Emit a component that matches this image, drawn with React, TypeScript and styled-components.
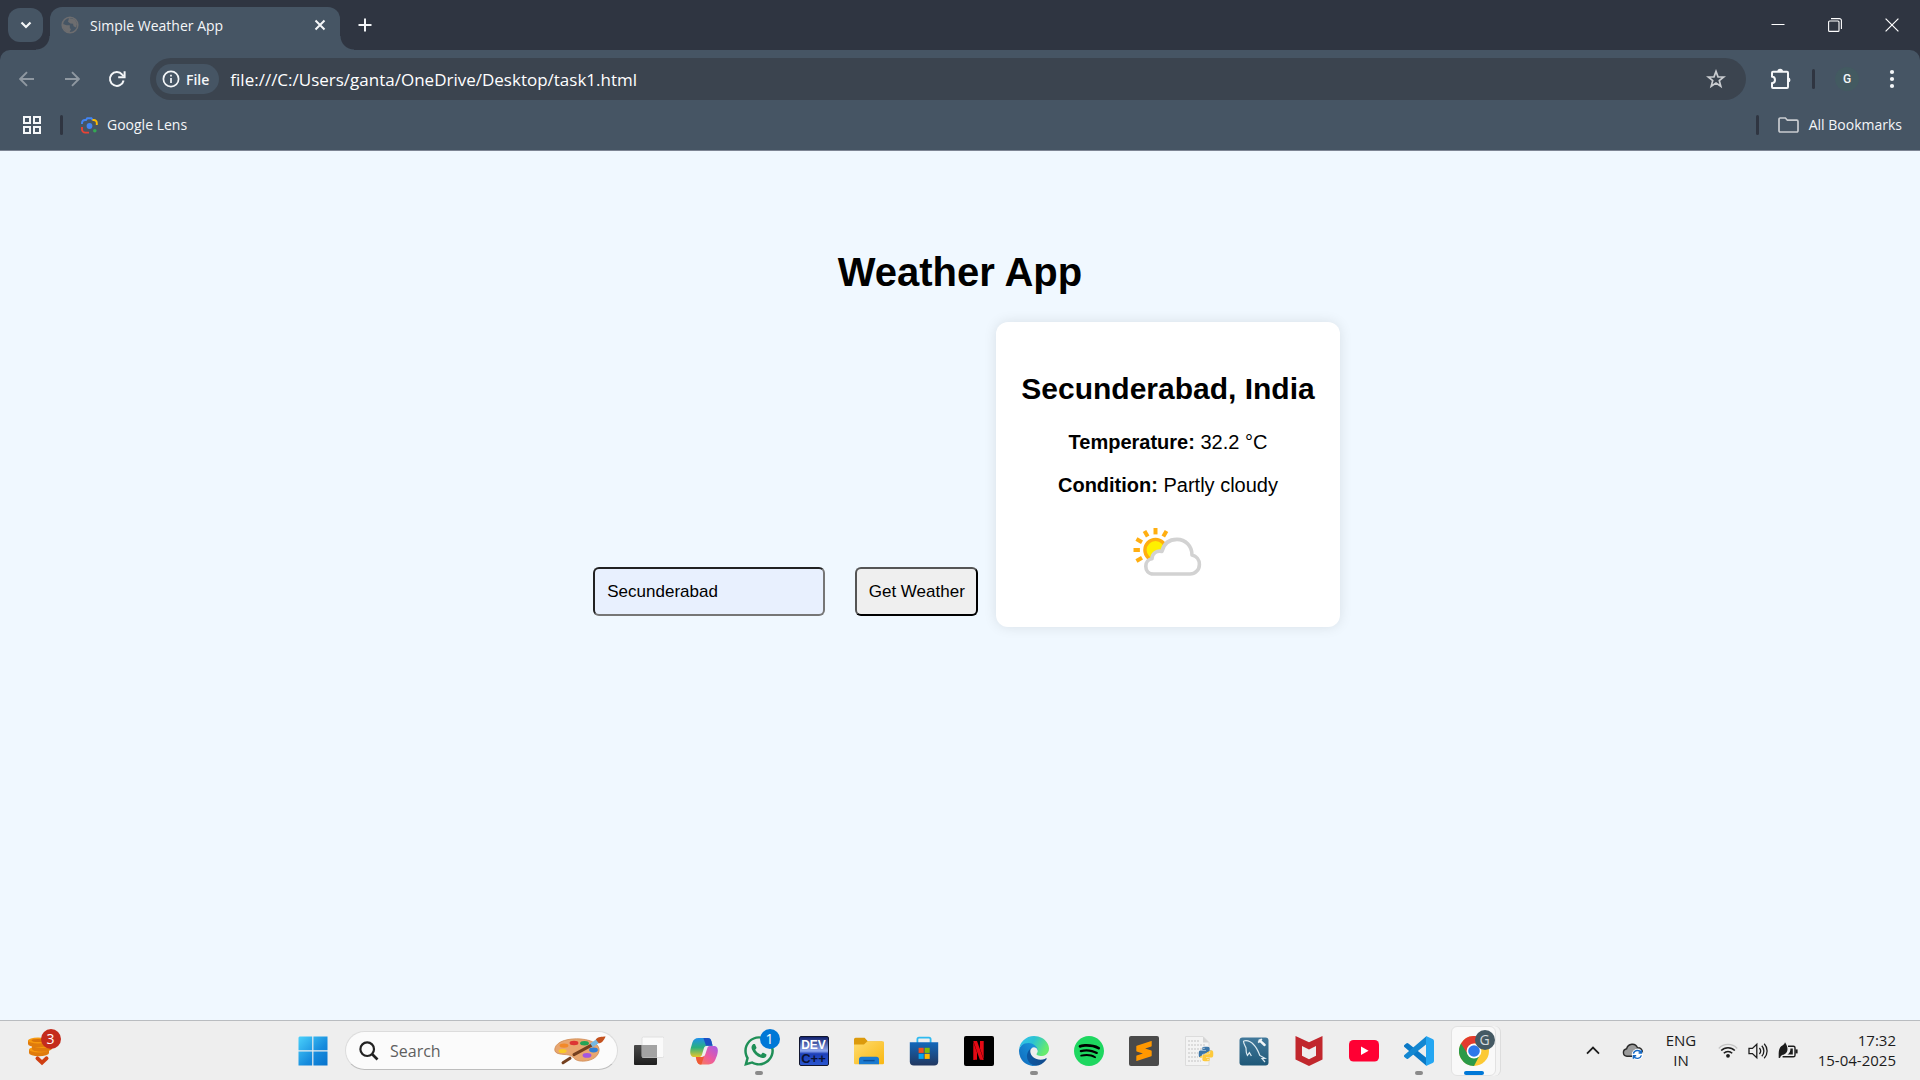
import React, { useState } from "react";
import styled, { createGlobalStyle } from "styled-components";
import { FaWhatsapp } from "react-icons/fa";
import { SiNetflix, SiSublimetext, SiSpotify, SiPython } from "react-icons/si";

const uiFont = `"Segoe UI", "Open Sans", "Noto Sans", sans-serif`;
const pageFont = `Arial, "Liberation Sans", sans-serif`;

const color = {
  strip: "#2f3541",
  toolbar: "#465564",
  field: "#3b444f",
  light: "#f4f6f8",
  muted: "#8f98a1",
  taskbar: "#eeeeee",
};

const GlobalStyle = createGlobalStyle`
  *, *::before, *::after { box-sizing: border-box; }
  body { margin: 0; }
  button, input { font: inherit; color: inherit; }
  svg { display: block; flex: none; }
`;

const Screen = styled.div`
  display: flex;
  flex-direction: column;
  min-height: 100vh;
  font-family: ${uiFont};
`;

/* ---------- Browser frame ---------- */

const Frame = styled.header`
  background: ${color.strip};
  color: ${color.light};
`;

const TabStrip = styled.div`
  display: flex;
  align-items: center;
  height: 50px;
  padding-left: 8px;
`;

const PlainButton = styled.button<{ $w?: number; $h?: number }>`
  display: flex;
  align-items: center;
  justify-content: center;
  flex: none;
  width: ${(p) => p.$w ?? 30}px;
  height: ${(p) => p.$h ?? 30}px;
  padding: 0;
  border: 0;
  background: transparent;
`;

const TabSearch = styled(PlainButton)`
  border-radius: 12px;
  background: ${color.toolbar};
`;

const Tab = styled.div`
  position: relative;
  display: flex;
  align-items: center;
  align-self: flex-end;
  width: 290px;
  height: 43px;
  margin-left: 7px;
  padding: 0 5px 7px 11px;
  gap: 11px;
  border-radius: 12px 12px 0 0;
  background: ${color.toolbar};
  font-size: 14px;

  &::before,
  &::after {
    content: "";
    position: absolute;
    bottom: 0;
    width: 14px;
    height: 14px;
  }
  &::before {
    right: 100%;
    background: radial-gradient(circle at 0 0, transparent 13px, ${color.toolbar} 14px);
  }
  &::after {
    left: 100%;
    background: radial-gradient(circle at 100% 0, transparent 13px, ${color.toolbar} 14px);
  }
`;

const TabTitle = styled.span`
  flex: 1;
  white-space: nowrap;
`;

const NewTab = styled(PlainButton)`
  margin-left: 10px;
`;

const WindowControls = styled.div`
  display: flex;
  margin-left: auto;
`;

const Bars = styled.div`
  border-bottom: 1px solid #7d8594;
  border-radius: 10px 10px 0 0;
  background: ${color.toolbar};
`;

const Toolbar = styled.div`
  display: flex;
  align-items: center;
  height: 50px;
  padding: 8px 13px 0 12px;
`;

const NavGroup = styled.div`
  display: flex;
  gap: 15px;
  margin-right: 18px;
`;

const AddressBar = styled.div`
  display: flex;
  align-items: center;
  flex: 1;
  height: 42px;
  padding: 0 15px 0 6px;
  border-radius: 21px;
  background: ${color.field};
`;

const SchemeChip = styled.button`
  display: flex;
  align-items: center;
  gap: 6px;
  height: 30px;
  padding: 0 10px 0 6px;
  border: 0;
  border-radius: 15px;
  background: ${color.toolbar};
  font-size: 14px;
  font-weight: 600;
`;

const AddressInput = styled.input`
  flex: 1;
  min-width: 0;
  padding: 0 0 0 11px;
  border: 0;
  outline: 0;
  background: transparent;
  color: #ffffff;
  font-size: 17px;
`;

const ToolGroup = styled.div`
  display: flex;
  align-items: center;
  margin-left: 20px;
`;

const Divider = styled.span<{ $gap: string }>`
  width: 3px;
  height: 20px;
  margin: ${(p) => p.$gap};
  border-radius: 2px;
  background: ${color.strip};
`;

const Avatar = styled(PlainButton)`
  margin-right: 18px;
  border-radius: 50%;
  background: #435a61;
  font-family: Roboto, sans-serif;
  font-size: 12px;
  font-weight: 500;
`;

const Bookmarks = styled.nav`
  display: flex;
  align-items: center;
  height: 50px;
  padding: 0 18px 0 17px;
  font-size: 14px;
`;

const BookmarkLink = styled.a`
  display: flex;
  align-items: center;
  gap: 9px;
  color: inherit;
  line-height: 18px;
  text-decoration: none;
  white-space: nowrap;
`;

const FolderButton = styled.button`
  display: flex;
  align-items: center;
  gap: 10px;
  padding: 0;
  border: 0;
  background: transparent;
  line-height: 18px;
  white-space: nowrap;
`;

const Spacer = styled.span`
  flex: 1;
`;

/* ---------- Weather page ---------- */

const Page = styled.main`
  display: flex;
  flex: 1;
  flex-direction: column;
  align-items: center;
  padding-top: 98px;
  background: #f0f8ff;
  color: #000000;
  font-family: ${pageFont};
`;

const Title = styled.h1`
  margin: 0 0 27px;
  font-size: 40px;
  line-height: 46px;
`;

const Lookup = styled.form`
  display: flex;
  align-items: flex-end;
  padding-left: 13px;
`;

const CityInput = styled.input`
  width: 232px;
  height: 49px;
  margin: 0 30px 11px 0;
  padding: 0 12px;
  border: 2px solid;
  border-color: #222222 #767676 #767676 #222222;
  border-radius: 6px;
  background: #e8f0fe;
  font-size: 17px;
`;

const SubmitButton = styled.button`
  width: 123px;
  height: 49px;
  margin: 0 18px 11px 0;
  padding: 0;
  border: 2px solid;
  border-color: #555555 #000000 #000000 #555555;
  border-radius: 6px;
  background: #efefef;
  font-size: 17px;
  white-space: nowrap;
`;

const Card = styled.section`
  display: flex;
  flex-direction: column;
  align-items: center;
  padding: 50px 25px 30px;
  border-radius: 12px;
  background: #ffffff;
  box-shadow: 0 0 13px rgba(0, 0, 0, 0.1);
`;

const City = styled.h2`
  margin: 0 0 25px;
  font-size: 30px;
  line-height: 34px;
`;

const Fact = styled.p`
  margin: 0 0 20px;
  font-size: 20px;
  line-height: 23px;
`;

/* ---------- Taskbar ---------- */

const Taskbar = styled.footer`
  display: flex;
  align-items: center;
  height: 60px;
  border-top: 1px solid #b9bcc0;
  background: ${color.taskbar};
  color: #1c1c1c;
  font-size: 14px;
`;

const Widgets = styled.div`
  flex: 1;
  padding-left: 12px;
`;

const AppCell = styled.button<{ $active?: boolean }>`
  position: relative;
  display: flex;
  align-items: center;
  justify-content: center;
  flex: none;
  width: ${(p) => (p.$active ? 45 : 55)}px;
  height: 50px;
  margin: 0 ${(p) => (p.$active ? 5 : 0)}px;
  padding: 0;
  border: ${(p) => (p.$active ? "1px solid #e2e2e2" : "0")};
  border-radius: 6px;
  background: ${(p) => (p.$active ? "#f9f9f9" : "transparent")};
  box-shadow: ${(p) => (p.$active ? "4px 0 0 #f4f4f4, 5px 0 0 #dddddd" : "none")};
`;

const Running = styled.span<{ $active?: boolean }>`
  position: absolute;
  bottom: ${(p) => (p.$active ? 0 : 1)}px;
  left: 50%;
  width: ${(p) => (p.$active ? 20 : 8)}px;
  height: 4px;
  border-radius: 2px;
  background: ${(p) => (p.$active ? "#0078d7" : "#8a8a8a")};
  transform: translateX(-50%);
`;

const Badge = styled.span<{ $bg: string; $fg?: string }>`
  position: absolute;
  top: 3px;
  left: 50%;
  width: 20px;
  height: 20px;
  margin-left: 1px;
  border-radius: 50%;
  background: ${(p) => p.$bg};
  color: ${(p) => p.$fg ?? "#ffffff"};
  font-size: 14px;
  line-height: 20px;
  text-align: center;
`;

const SearchBox = styled.label`
  display: flex;
  align-items: center;
  width: 273px;
  height: 39px;
  margin: 0 3px 0 5px;
  padding: 0 11px 0 13px;
  gap: 11px;
  border: 1px solid #dcdcdc;
  border-bottom-color: #bdbdbd;
  border-radius: 20px;
  background: #fbfbfb;
`;

const SearchInput = styled.input`
  flex: 1;
  min-width: 0;
  padding: 0;
  border: 0;
  outline: 0;
  background: transparent;
  font-size: 16px;

  &::placeholder {
    color: #5f5f5f;
    opacity: 1;
  }
`;

const Tray = styled.div`
  display: flex;
  align-items: center;
  margin-left: 72px;
  padding-right: 24px;
`;

const TrayText = styled.button<{ $align: "center" | "right"; $w: number }>`
  flex: none;
  width: ${(p) => p.$w}px;
  padding: 0 0 2px;
  border: 0;
  background: transparent;
  font-size: 15px;
  line-height: 20px;
  text-align: ${(p) => p.$align};
  white-space: pre-line;
`;

const QuickSettings = styled.button`
  display: flex;
  align-items: center;
  gap: 10px;
  margin-left: 9px;
  padding: 0;
  border: 0;
  background: transparent;
`;

const DevTile = styled.span`
  display: flex;
  flex-direction: column;
  width: 30px;
  height: 30px;
  border: 1px solid #10152e;
  border-radius: 2px;
  background: linear-gradient(#10206e, #8fa8f0 50%, #1d3fb8 60%, #2a56cf);
  overflow: hidden;
  color: #ffffff;
  font-family: "Liberation Sans", sans-serif;
  font-size: 12px;
  font-weight: 700;
  line-height: 16px;
  text-align: center;
`;

const DevSub = styled.span`
  color: #0b1233;
  font-size: 13px;
  line-height: 12px;
`;

const Tile = styled.span<{ $bg: string; $fg: string }>`
  display: flex;
  align-items: center;
  justify-content: center;
  width: 30px;
  height: 30px;
  border-radius: 2px;
  background: ${(p) => p.$bg};
  color: ${(p) => p.$fg};
`;

/* ---------- Drawings ---------- */

const stroke = (w: number, c = "currentColor") => ({
  fill: "none",
  stroke: c,
  strokeWidth: w,
});

const GlobeIcon = () => (
  <svg width="18" height="18" viewBox="0 0 18 18">
    <circle cx="9" cy="9" r="7.8" {...stroke(1.6, "#6d6d6f")} />
    <path d="M2 8 5.5 9.2 8.8 9.2 8.8 12 10 13.2 8.4 16.4 5 15.6 2 12ZM8 2 14 3.6 16 8 15 11.4 12.6 10.2 12 7.8 9.4 7.4 7 5.8Z" fill="#6d6d6f" />
  </svg>
);

const ArrowIcon = ({ right }: { right?: boolean }) => (
  <svg width="16" height="16" viewBox="0 0 16 16">
    <path d={right ? "M1 8H14.5M8 1.2 14.8 8 8 14.8" : "M15 8H1.5M8 1.2 1.2 8 8 14.8"} {...stroke(1.9, color.muted)} />
  </svg>
);

const ReloadIcon = () => (
  <svg width="18" height="18" viewBox="0 0 18 18">
    <path d="M15.6 10.5A6.9 6.9 0 1 1 14.2 4.6L15.6 6.2" {...stroke(2)} />
    <path d="M16.6 1.2V7.3H10.2" {...stroke(2)} />
  </svg>
);

const InfoIcon = () => (
  <svg width="18" height="18" viewBox="0 0 18 18">
    <circle cx="9" cy="9" r="7.6" {...stroke(1.7)} />
    <path d="M9 8V13M9 4.8V6.6" {...stroke(1.7)} />
  </svg>
);

const StarIcon = () => (
  <svg width="20" height="20" viewBox="0 0 20 20">
    <path d="M10 2.4 12 7.8 17.8 8 13.3 11.6 14.8 17.2 10 14 5.2 17.2 6.7 11.6 2.2 8 8 7.8Z" {...stroke(1.7, "#c9ccd0")} />
  </svg>
);

const PuzzleIcon = () => (
  <svg width="22" height="22" viewBox="0 0 22 22">
    <path d="M2 4.8A1 1 0 0 1 3 3.8H17A1 1 0 0 1 18 4.8V19A1 1 0 0 1 17 20H3A1 1 0 0 1 2 19V15.2C6 14.6 6 9.2 2 8.6Z" {...stroke(2)} />
    <path d="M7.4 3.6A2.8 2.8 0 0 1 13 3.6ZM18.4 9.2A2.8 2.8 0 0 1 18.4 14.6Z" fill="currentColor" />
  </svg>
);

const DotsIcon = () => (
  <svg width="6" height="20" viewBox="0 0 6 20">
    <circle cx="3" cy="3" r="2.1" fill="currentColor" />
    <circle cx="3" cy="10" r="2.1" fill="currentColor" />
    <circle cx="3" cy="17" r="2.1" fill="currentColor" />
  </svg>
);

const GridIcon = () => (
  <svg width="18" height="18" viewBox="0 0 18 18">
    <path d="M1 1H7V7H1ZM11 1H17V7H11ZM1 11H7V17H1ZM11 11H17V17H11Z" {...stroke(2)} />
  </svg>
);

const LensIcon = () => (
  <svg width="17" height="17" viewBox="0 0 17 17">
    <path d="M1 7V6A3.2 3.2 0 0 1 4 3H5L6.2 1.2H10.4L11.6 3" {...stroke(1.9, "#4285f4")} />
    <path d="M11.4 3H12.6A3 3 0 0 1 15.8 6V8" {...stroke(1.9, "#fbbc04")} />
    <path d="M1 10V12.4A3.2 3.2 0 0 0 4.2 15.6H8" {...stroke(1.9, "#ea4335")} />
    <circle cx="8.5" cy="9" r="2.9" fill="#4285f4" />
    <circle cx="13.8" cy="13.8" r="1.8" fill="#34a853" />
  </svg>
);

const FolderOutline = () => (
  <svg width="21" height="16" viewBox="0 0 21 16">
    <path d="M1 2.2A1.2 1.2 0 0 1 2.2 1H7.4L9.4 3.2H18.8A1.2 1.2 0 0 1 20 4.4V13.8A1.2 1.2 0 0 1 18.8 15H2.2A1.2 1.2 0 0 1 1 13.8Z" {...stroke(1.7, "#c9ccd0")} />
  </svg>
);

const rays = [-120, -90, -60, -30, 0, 30];

const PartlyCloudy = () => (
  <svg width="80" height="80" viewBox="0 0 80 80" role="img" aria-label="Partly cloudy">
    {rays.map((a) => (
      <path key={a} d="M27.5 17.4V11" transform={`rotate(${a} 27.5 33)`} {...stroke(4, "#ffae10")} />
    ))}
    <circle cx="27.5" cy="33" r="10.6" fill="#fff000" stroke="#ffae10" strokeWidth="3.4" />
    <path d="M25.5 57C20 57 17.8 53 17.8 49.2C17.8 45.4 20.4 42.2 24 41.8C24 36.6 28.6 33 34 34.4C36 25.6 42 22.4 49 22.4C57.4 22.4 64 29 64 38C68.4 39 71.4 42.6 71.4 47.4C71.4 53 67 57 62 57Z" fill="#fff" stroke="#d2d2d2" strokeWidth="3.6" strokeLinejoin="round" />
  </svg>
);

const Coins = () => (
  <svg width="24" height="30" viewBox="0 0 24 30">
    {[[11, 13.5], [14, 9], [10, 4.5]].map(([x, y], i) => (
      <g key={i}>
        <path d={`M${x - 10} ${y}V${y + 3.6}A10 3.2 0 0 0 ${x + 10} ${y + 3.6}V${y}Z`} fill="#e07b0c" />
        <ellipse cx={x} cy={y} rx="10" ry="3" fill="#f7990f" />
        <ellipse cx={x} cy={y} rx="6.5" ry="1.6" fill="#d9730a" />
      </g>
    ))}
    <path d="M9.5 22.4 14 26.6 18.5 22.4" {...stroke(4, "#cf3f12")} strokeLinecap="round" />
  </svg>
);

const WindowsLogo = () => (
  <svg width="30" height="30" viewBox="0 0 30 30">
    <defs>
      <linearGradient id="win" x1="0" y1="0" x2="1" y2="1">
        <stop offset="0" stopColor="#4ad1fb" />
        <stop offset=".6" stopColor="#168bdd" />
        <stop offset="1" stopColor="#0672cc" />
      </linearGradient>
    </defs>
    <path d="M1.5 .5H14.2V14.2H.5V1.5ZM15.4 .5H29.5V14.2H15.4ZM.5 15.4H14.2V29.5H.5ZM15.4 15.4H29.5V29.5H15.4Z" fill="url(#win)" />
  </svg>
);

const SearchIcon = () => (
  <svg width="20" height="20" viewBox="0 0 20 20">
    <circle cx="8.2" cy="8.2" r="6.8" {...stroke(2.2, "#222")} />
    <path d="M13 13 18.5 18.5" {...stroke(2.6, "#222")} />
  </svg>
);

const Palette = () => (
  <svg width="52" height="30" viewBox="0 0 52 30">
    <path d="M1 12C3 5 15 2 27 3C39 4 46 9 45 15C44 22 35 26 26 25C19 24 20 20 15 19C9 18 -1 19 1 12Z" fill="#e8a66f" stroke="#cf8b55" strokeWidth=".8" />
    <ellipse cx="10" cy="9.6" rx="4.4" ry="2.2" fill="#f2892a" />
    <ellipse cx="20" cy="7" rx="4.4" ry="2.2" fill="#dd3434" />
    <ellipse cx="30.5" cy="7.2" rx="4.4" ry="2.2" fill="#23a455" />
    <ellipse cx="39.5" cy="14" rx="4.4" ry="2.4" fill="#2f7fd6" />
    <ellipse cx="33" cy="19.4" rx="4.4" ry="2.4" fill="#a356e0" />
    <ellipse cx="8.6" cy="15" rx="4" ry="2" fill="#f9c926" />
    <path d="M9 26.8 16 22.2M20 18.6 39 8.4" {...stroke(3, "#75401f")} strokeLinecap="round" />
    <path d="M37.5 9.4 44 4.8" {...stroke(4.6, "#76b7e0")} />
    <path d="M41.8 3.4C44 .6 48 1 51.6 .6C50 4 48 7.6 44.8 7.2Z" fill="#c4521f" />
  </svg>
);

const TaskView = () => (
  <svg width="30" height="30" viewBox="0 0 30 30">
    <defs>
      <linearGradient id="tvd" x1="0" y1="0" x2="0" y2="1">
        <stop offset="0" stopColor="#4a4a4a" />
        <stop offset="1" stopColor="#1e1e1e" />
      </linearGradient>
    </defs>
    <rect x="0" y="9" width="23" height="20" rx="1" fill="url(#tvd)" />
    <rect x="8" y="1" width="22" height="20.5" rx="1.5" fill="#fafafa" stroke="#dadada" strokeWidth=".8" />
    <path d="M8 9H23V21.5H8Z" fill="#a3a3a3" />
  </svg>
);

const Copilot = () => (
  <svg width="28" height="28" viewBox="0 0 28 28">
    <defs>
      <linearGradient id="cpa" x1="0" y1="0" x2="0" y2="1">
        <stop offset="0" stopColor="#2090ec" />
        <stop offset=".5" stopColor="#2bb07e" />
        <stop offset="1" stopColor="#e7c62b" />
      </linearGradient>
      <linearGradient id="cpb" x1="1" y1="0" x2="0" y2="1">
        <stop offset="0" stopColor="#a45be8" />
        <stop offset=".5" stopColor="#ec5aa0" />
        <stop offset="1" stopColor="#fb8448" />
      </linearGradient>
    </defs>
    <path d="M19.6 9H23.4C28.6 9 28.4 14 27 18.4L25.4 22.6C24 26 22 27.4 18.6 27.4H10.6C8.6 27.4 7.4 26 6.8 24L5.8 20H11.6C13.8 20 14.8 18.8 15.4 17L17.2 11.6C17.6 10 18.2 9 19.6 9Z" fill="url(#cpb)" />
    <path d="M8.6 1H17.6C19.8 1 20.8 2 21.4 4.2L22.6 8.8H17.4C15.2 8.8 14.4 9.8 13.8 11.4L12 17.4C11.4 19.2 10.6 20 8.4 20H4.4C0 20 -.4 15.4 .8 11L2.4 5.6C3.4 2.6 5.2 1 8.6 1Z" fill="url(#cpa)" />
    <path d="M13.4 1H17.6C19.8 1 20.8 2 21.4 4.2L22.6 8.8H16Z" fill="#1b4fc4" />
    <path d="M5.8 20H11.6C12.8 20 13.6 19.6 14.2 19L11.4 27.4H10.6C8.6 27.4 7.4 26 6.8 24Z" fill="#ee5a35" />
  </svg>
);

const FolderIcon = () => (
  <svg width="30" height="28" viewBox="0 0 30 28">
    <defs>
      <linearGradient id="fld" x1="0" y1="0" x2="1" y2="1">
        <stop offset="0" stopColor="#ffdc6e" />
        <stop offset="1" stopColor="#f9b712" />
      </linearGradient>
    </defs>
    <path d="M0 2.4A1.6 1.6 0 0 1 1.6 .8H10.6L14 4.4H28V10H0Z" fill="#dc9a0c" />
    <path d="M0 7.4H10L13.4 4.2H28.6A1.4 1.4 0 0 1 30 5.6V26A1.2 1.2 0 0 1 28.8 27.2H1.2A1.2 1.2 0 0 1 0 26Z" fill="url(#fld)" />
    <path d="M5 27.2V22.4A2.6 2.6 0 0 1 7.6 19.8H22.4A2.6 2.6 0 0 1 25 22.4V27.2Z" fill="#1a7ad0" />
    <path d="M9.4 23.6H20.6" {...stroke(1.4, "#0b4f98")} />
  </svg>
);

const StoreIcon = () => (
  <svg width="30" height="30" viewBox="0 0 30 30">
    <defs>
      <linearGradient id="sto" x1="0" y1="0" x2="0" y2="1">
        <stop offset="0" stopColor="#1268bb" />
        <stop offset="1" stopColor="#213760" />
      </linearGradient>
    </defs>
    <path d="M8.4 7V3.2A1.6 1.6 0 0 1 10 1.6H20A1.6 1.6 0 0 1 21.6 3.2V7" {...stroke(1.8, "#2fbaf0")} />
    <path d="M.8 6.2H29.2V25.4A4 4 0 0 1 25.2 29.4H4.8A4 4 0 0 1 .8 25.4Z" fill="url(#sto)" />
    <path d="M9.6 11.8H14.7V16.9H9.6Z" fill="#f2511f" />
    <path d="M15.6 11.8H20.7V16.9H15.6Z" fill="#80ba06" />
    <path d="M9.6 17.8H14.7V22.9H9.6Z" fill="#05a5ef" />
    <path d="M15.6 17.8H20.7V22.9H15.6Z" fill="#ffb901" />
  </svg>
);

const EdgeIcon = () => (
  <svg width="30" height="30" viewBox="0 0 256 256">
    <defs>
      <linearGradient id="e1" x1="0" y1="0" x2="1" y2="0">
        <stop offset="0" stopColor="#0c59a4" />
        <stop offset="1" stopColor="#114a8b" />
      </linearGradient>
      <linearGradient id="e2" x1="1" y1="0" x2="0" y2="1">
        <stop offset="0" stopColor="#1b9de2" />
        <stop offset="1" stopColor="#0f68ba" />
      </linearGradient>
      <linearGradient id="e3" x1="0" y1="0" x2="1" y2=".4">
        <stop offset="0" stopColor="#35c1f1" />
        <stop offset=".5" stopColor="#2bc3d2" />
        <stop offset="1" stopColor="#66eb6e" />
      </linearGradient>
    </defs>
    <path transform="translate(-4.6 -4.9)" fill="url(#e1)" d="M235.7 195.5a93.7 93.7 0 0 1-10.6 4.7 101.9 101.9 0 0 1-35.9 6.4c-47.3 0-88.5-32.5-88.5-74.3a31.5 31.5 0 0 1 16.4-27.3c-42.8 1.8-53.8 46.4-53.8 72.5 0 73.9 68.1 81.4 82.8 81.4 7.9 0 19.8-2.3 27-4.6l1.3-.4a128.3 128.3 0 0 0 66.6-52.8 4 4 0 0 0-5.3-5.6z" />
    <path transform="translate(-4.6 -4.9)" fill="url(#e2)" d="M110.3 246.3A79.2 79.2 0 0 1 87.6 225a80.7 80.7 0 0 1 29.5-120c3.1-1.5 8.5-4.1 15.6-4a32.4 32.4 0 0 1 25.7 13 31.9 31.9 0 0 1 6.3 18.7c0-.2 24.5-79.6-80-79.6-43.9 0-80 41.6-80 78.2a130.2 130.2 0 0 0 12.1 56 128 128 0 0 0 156.4 67.1 75.6 75.6 0 0 1-62.8-8z" />
    <path fill="url(#e3)" d="M152.3 148.9c-.8 1-3.3 2.5-3.3 5.6 0 2.6 1.7 5.1 4.7 7.3 14.4 10 41.5 8.6 41.6 8.6a59.6 59.6 0 0 0 30.3-8.3A61.4 61.4 0 0 0 256 109.2c.3-22.4-8-37.3-11.3-43.9C223.5 23.8 177.7 0 128 0A128 128 0 0 0 0 126.2c.5-36.5 36.8-66 80-66 3.5 0 23.5.3 42 10a72.6 72.6 0 0 1 30.9 29.3c6.1 10.6 7.2 24.1 7.2 29.5s-2.7 13.3-7.8 19.9z" />
  </svg>
);

const PythonFile = () => (
  <svg width="30" height="30" viewBox="0 0 30 30">
    <path d="M1.5 .5H19L25 6.5V29.5H1.5Z" fill="#f3f3f3" stroke="#dcdcdc" />
    <path d="M19 .5V6.5H25Z" fill="#d5d5d5" />
    <path d="M4 5H16M4 9H21M4 13H21M4 17H14M4 21H14M4 25H17" {...stroke(1.4, "#d3d3d3")} strokeDasharray="2 1" />
    <defs>
      <linearGradient id="py" x1="0" y1="0" x2=".6" y2="1">
        <stop offset=".52" stopColor="#3a75a8" />
        <stop offset=".56" stopColor="#fdc93b" />
      </linearGradient>
    </defs>
    <g transform="translate(14.5 10.5)">
      <SiPython size={15} style={{ fill: "url(#py)" }} />
    </g>
  </svg>
);

const MySqlIcon = () => (
  <svg width="30" height="30" viewBox="0 0 30 30">
    <defs>
      <linearGradient id="sql" x1="0" y1="0" x2="0" y2="1">
        <stop offset="0" stopColor="#42799b" />
        <stop offset="1" stopColor="#1f5878" />
      </linearGradient>
    </defs>
    <rect x=".5" y="1.5" width="29" height="28" rx="3" fill="url(#sql)" />
    <path d="M4.5 5C8 4 12 5.6 15 9C18 12 19.4 16 20.8 19.4L26 22.4L23 22.6L26 26M4.5 5C4.4 8 6.4 9.6 7 12C7.4 15 6.6 17 8.4 19.4L10.4 16.6L12.4 20" {...stroke(1.2, "#dbe9f0")} />
    <path d="M20.6 4.4 25.6 9" {...stroke(2.4, "#f2f6f8")} strokeLinecap="round" />
    <path d="M19.2 6.6 22.8 3" {...stroke(1.8, "#f2f6f8")} />
  </svg>
);

const McAfeeIcon = () => (
  <svg width="28" height="30" viewBox="0 0 28 30">
    <path d="M.5 0 14 6.2 27.5 0V23.6L14 30 .5 23.6ZM7 10V19.8L14 23.2 21 19.8V10L14 13.4Z" fill="#c1272d" fillRule="evenodd" />
  </svg>
);

const YouTubeIcon = () => (
  <svg width="30" height="22" viewBox="0 0 30 22">
    <rect width="30" height="21.6" rx="4.5" fill="#ff0033" />
    <path d="M12 6.6 19.6 10.8 12 15Z" fill="#fff" />
  </svg>
);

const CodeIcon = () => (
  <svg width="30" height="30" viewBox="0 0 30 30">
    <path d="M2.2 7.4 .4 9A1.4 1.4 0 0 0 .4 11L22 29.4V21.6L4.4 7.6A1.6 1.6 0 0 0 2.2 7.4Z" fill="#0a79c6" />
    <path d="M2.2 22.6 .4 21A1.4 1.4 0 0 1 .4 19L22 .6V8.6L4.4 22.4A1.6 1.6 0 0 1 2.2 22.6Z" fill="#1387d1" />
    <path d="M22 0 28.6 3A2.2 2.2 0 0 1 30 5V25A2.2 2.2 0 0 1 28.6 27L22 30Z" fill="#24a6f2" />
  </svg>
);

const ChromeIcon = () => (
  <svg width="30" height="30" viewBox="0 0 30 30">
    <circle cx="15" cy="15" r="15" fill="#fcc934" />
    <path d="M15 15 2 7.5A15 15 0 0 0 15 30L21 18.5Z" fill="#2b9a48" />
    <path d="M2 7.5A15 15 0 0 1 28 7.5H15L9 18.6Z" fill="#e33b2e" />
    <circle cx="15" cy="15" r="7.4" fill="#fff" />
    <circle cx="15" cy="15" r="5.8" fill="#2d77ea" />
  </svg>
);

const CloudSync = () => (
  <svg width="22" height="18" viewBox="0 0 22 18">
    <path d="M5 14.2C.4 14 .2 7.8 4.6 6.8C6 1.4 13.4 .6 15.4 5.6C18.6 5.4 20.6 7.6 20.4 10.4L16 14.2Z" fill="#9b9b9b" stroke="#2a2a2a" strokeWidth="1.4" />
    <circle cx="15.4" cy="12.4" r="5.6" fill="#fff" />
    <path d="M11.4 11.6A4.2 4.2 0 0 1 19 10.4M19.4 8V11H16.6M19.4 13.4A4.2 4.2 0 0 1 11.8 14.4M11.4 16.8V13.8H14.2" {...stroke(1.4, "#1468c4")} />
  </svg>
);

const WifiIcon = () => (
  <svg width="20" height="16" viewBox="0 0 20 16">
    <path d="M.8 5.4A12.6 12.6 0 0 1 19.2 5.4" {...stroke(1.4, "#c4c4c4")} />
    <path d="M3.2 7.6A9.4 9.4 0 0 1 16.8 7.6M5.8 10.2A5.8 5.8 0 0 1 14.2 10.2" {...stroke(1.5)} />
    <circle cx="10" cy="12.8" r="1.9" fill="currentColor" />
  </svg>
);

const SoundIcon = () => (
  <svg width="20" height="18" viewBox="0 0 20 18">
    <path d="M1 6.4H4.4L8.8 2.2V15.8L4.4 11.6H1ZM11.4 6A4.6 4.6 0 0 1 11.4 12M13.8 3.8A7.6 7.6 0 0 1 13.8 14.2M16.2 1.8A10.4 10.4 0 0 1 16.2 16.2" {...stroke(1.3)} />
  </svg>
);

const BatteryIcon = () => (
  <svg width="20" height="18" viewBox="0 0 20 18">
    <path d="M10 4.2H15.4A1.6 1.6 0 0 1 17 5.8V13.2A1.6 1.6 0 0 1 15.4 14.8H4.6" {...stroke(1.4)} />
    <path d="M17.4 7.4H19.6V11.4H17.4Z" fill="currentColor" />
    <path d="M12.4 6.4H14.8V12.6H9.4C11.6 11 12.6 9 12.4 6.4Z" fill="currentColor" />
    <path d="M.6 15.8C1 12.6 -.4 6 4.4 3.4C6 2.6 6.6 1.6 7 .2C10.2 4.6 10.8 10.4 6 12.6C4.4 13.2 3 13 2 16Z" fill="currentColor" />
  </svg>
);

/* ---------- App ---------- */

interface AppEntry {
  name: string;
  icon: React.ReactNode;
  running?: boolean;
  active?: boolean;
  badge?: { text: string; bg: string; fg?: string };
}

const apps: AppEntry[] = [
  { name: "Task view", icon: <TaskView /> },
  { name: "Copilot", icon: <Copilot /> },
  { name: "WhatsApp", icon: <FaWhatsapp size={34} color="#1f8f57" />, running: true, badge: { text: "1", bg: "#0078d7" } },
  { name: "Dev-C++", icon: <DevTile>DEV<DevSub>C++</DevSub></DevTile> },
  { name: "File Explorer", icon: <FolderIcon /> },
  { name: "Microsoft Store", icon: <StoreIcon /> },
  { name: "Netflix", icon: <Tile $bg="#000000" $fg="#e50914"><SiNetflix size={19} /></Tile> },
  { name: "Edge", icon: <EdgeIcon />, running: true },
  { name: "Spotify", icon: <Tile $bg="radial-gradient(circle, #000000 12px, transparent 13px)" $fg="#1ed760"><SiSpotify size={30} /></Tile> },
  { name: "Sublime Text", icon: <Tile $bg="#4a4a4a" $fg="#ff9800"><SiSublimetext size={20} /></Tile> },
  { name: "Python", icon: <PythonFile /> },
  { name: "MySQL Workbench", icon: <MySqlIcon /> },
  { name: "McAfee", icon: <McAfeeIcon /> },
  { name: "YouTube", icon: <YouTubeIcon /> },
  { name: "Visual Studio Code", icon: <CodeIcon />, running: true },
  { name: "Chrome", icon: <ChromeIcon />, running: true, active: true, badge: { text: "G", bg: "#455a64", fg: "#d5dadd" } },
];

export default function App() {
  const [city, setCity] = useState("Secunderabad");

  return (
    <Screen>
      <GlobalStyle />
      <Frame>
        <TabStrip>
          <TabSearch $w={35} $h={34} aria-label="Search tabs">
            <svg width="12" height="8" viewBox="0 0 12 8"><path d="M1.5 1.5 6 6 10.5 1.5" {...stroke(2.2)} /></svg>
          </TabSearch>
          <Tab>
            <GlobeIcon />
            <TabTitle>Simple Weather App</TabTitle>
            <PlainButton aria-label="Close tab">
              <svg width="12" height="12" viewBox="0 0 12 12"><path d="M1.5 1.5 10.5 10.5M10.5 1.5 1.5 10.5" {...stroke(2)} /></svg>
            </PlainButton>
          </Tab>
          <NewTab aria-label="New tab">
            <svg width="14" height="14" viewBox="0 0 14 14"><path d="M7 .5V13.5M.5 7H13.5" {...stroke(2)} /></svg>
          </NewTab>
          <WindowControls>
            <PlainButton $w={57} $h={48} aria-label="Minimize">
              <svg width="14" height="2" viewBox="0 0 14 2"><path d="M.5 .5H13.5" {...stroke(1, "#fff")} /></svg>
            </PlainButton>
            <PlainButton $w={57} $h={48} aria-label="Restore">
              <svg width="14" height="14" viewBox="0 0 14 14"><path d="M.6 4A1 1 0 0 1 1.6 3H10A1 1 0 0 1 11 4V12.4A1 1 0 0 1 10 13.4H1.6A1 1 0 0 1 .6 12.4ZM3 .6H11.4A2 2 0 0 1 13.4 2.6V11" {...stroke(1.1, "#fff")} /></svg>
            </PlainButton>
            <PlainButton $w={57} $h={48} aria-label="Close">
              <svg width="14" height="14" viewBox="0 0 14 14"><path d="M.6 .6 13.4 13.4M13.4 .6 .6 13.4" {...stroke(1.2, "#fff")} /></svg>
            </PlainButton>
          </WindowControls>
        </TabStrip>
        <Bars>
          <Toolbar>
            <NavGroup>
              <PlainButton aria-label="Back"><ArrowIcon /></PlainButton>
              <PlainButton aria-label="Forward"><ArrowIcon right /></PlainButton>
              <PlainButton aria-label="Reload"><ReloadIcon /></PlainButton>
            </NavGroup>
            <AddressBar>
              <SchemeChip><InfoIcon />File</SchemeChip>
              <AddressInput aria-label="Address" defaultValue="file:///C:/Users/ganta/OneDrive/Desktop/task1.html" />
              <PlainButton aria-label="Bookmark this page"><StarIcon /></PlainButton>
            </AddressBar>
            <ToolGroup>
              <PlainButton aria-label="Extensions"><PuzzleIcon /></PlainButton>
              <Divider $gap="0 20px 0 16px" />
              <Avatar $w={24} $h={24} aria-label="Profile">G</Avatar>
              <PlainButton aria-label="Menu"><DotsIcon /></PlainButton>
            </ToolGroup>
          </Toolbar>
          <Bookmarks aria-label="Bookmarks">
            <PlainButton aria-label="Apps"><GridIcon /></PlainButton>
            <Divider $gap="0 18px 0 13px" />
            <BookmarkLink href="#lens"><LensIcon />Google Lens</BookmarkLink>
            <Spacer />
            <Divider $gap="0 19px 0 0" />
            <FolderButton><FolderOutline />All Bookmarks</FolderButton>
          </Bookmarks>
        </Bars>
      </Frame>

      <Page>
        <Title>Weather App</Title>
        <Lookup onSubmit={(e) => e.preventDefault()}>
          <CityInput aria-label="City" value={city} onChange={(e) => setCity(e.target.value)} />
          <SubmitButton type="submit">Get Weather</SubmitButton>
          <Card>
            <City>Secunderabad, India</City>
            <Fact><strong>Temperature:</strong> 32.2 °C</Fact>
            <Fact><strong>Condition:</strong> Partly cloudy</Fact>
            <PartlyCloudy />
          </Card>
        </Lookup>
      </Page>

      <Taskbar>
        <Widgets>
          <AppCell aria-label="Widgets"><Coins /><Badge $bg="#c42b1c">3</Badge></AppCell>
        </Widgets>
        <AppCell aria-label="Start"><WindowsLogo /></AppCell>
        <SearchBox>
          <SearchIcon />
          <SearchInput aria-label="Search" placeholder="Search" />
          <Palette />
        </SearchBox>
        {apps.map((app) => (
          <AppCell key={app.name} aria-label={app.name} $active={app.active}>
            {app.icon}
            {app.badge && <Badge $bg={app.badge.bg} $fg={app.badge.fg}>{app.badge.text}</Badge>}
            {app.running && <Running $active={app.active} />}
          </AppCell>
        ))}
        <Tray>
          <PlainButton $w={40} aria-label="Show hidden icons">
            <svg width="14" height="9" viewBox="0 0 14 9"><path d="M1 7.6 7 1.6 13 7.6" {...stroke(1.8)} /></svg>
          </PlainButton>
          <PlainButton $w={40} aria-label="OneDrive"><CloudSync /></PlainButton>
          <TrayText $align="center" $w={56}>{"ENG\nIN"}</TrayText>
          <QuickSettings aria-label="Quick settings"><WifiIcon /><SoundIcon /><BatteryIcon /></QuickSettings>
          <TrayText $align="right" $w={98}>{"17:32\n15-04-2025"}</TrayText>
        </Tray>
      </Taskbar>
    </Screen>
  );
}
